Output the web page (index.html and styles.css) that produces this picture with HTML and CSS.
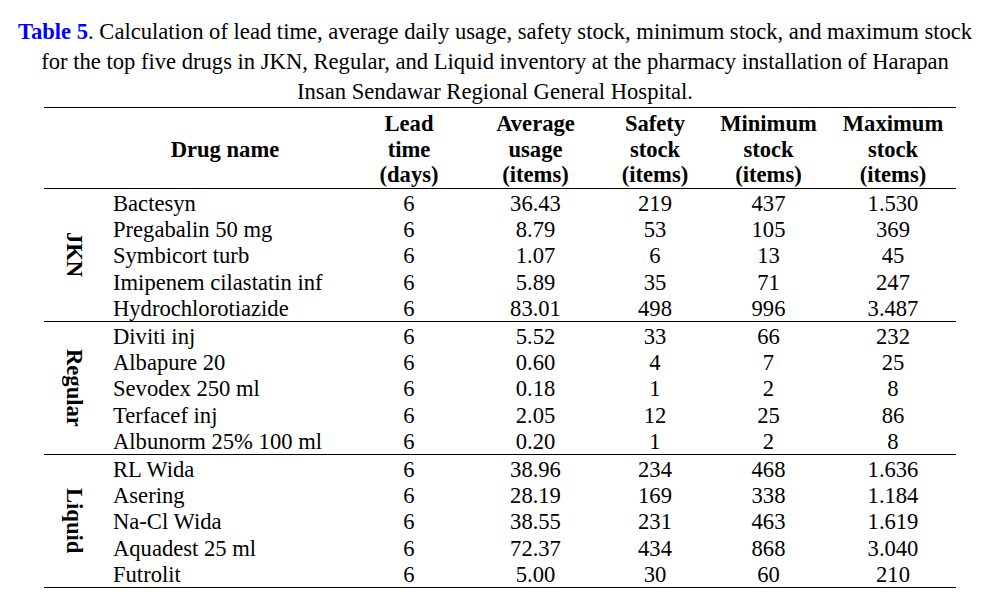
FILE: index.html
```html
<!DOCTYPE html>
<html>
<head>
<meta charset="utf-8">
<link rel="stylesheet" href="styles.css">
</head>
<body>
<p class="caption"><span class="label">Table 5</span>. Calculation of lead time, average daily usage, safety stock, minimum stock, and maximum stock<br>for the top five drugs in JKN, Regular, and Liquid inventory at the pharmacy installation of Harapan<br>Insan Sendawar Regional General Hospital.</p>
<table class="data">
  <colgroup>
    <col class="c-grp"><col class="c-name"><col class="c-lead"><col class="c-avg"><col class="c-safe"><col class="c-min"><col class="c-max">
  </colgroup>
  <thead>
    <tr>
      <th></th>
      <th>Drug name</th>
      <th>Lead<br>time<br>(days)</th>
      <th>Average<br>usage<br>(items)</th>
      <th>Safety<br>stock<br>(items)</th>
      <th>Minimum<br>stock<br>(items)</th>
      <th>Maximum<br>stock<br>(items)</th>
    </tr>
  </thead>
  <tbody>
    <tr><td class="grp" rowspan="5"><div class="vert">JKN</div></td><td class="name">Bactesyn</td><td>6</td><td>36.43</td><td>219</td><td>437</td><td>1.530</td></tr>
    <tr><td class="name">Pregabalin 50 mg</td><td>6</td><td>8.79</td><td>53</td><td>105</td><td>369</td></tr>
    <tr><td class="name">Symbicort turb</td><td>6</td><td>1.07</td><td>6</td><td>13</td><td>45</td></tr>
    <tr><td class="name">Imipenem cilastatin inf</td><td>6</td><td>5.89</td><td>35</td><td>71</td><td>247</td></tr>
    <tr><td class="name">Hydrochlorotiazide</td><td>6</td><td>83.01</td><td>498</td><td>996</td><td>3.487</td></tr>
  </tbody>
  <tbody>
    <tr><td class="grp" rowspan="5"><div class="vert">Regular</div></td><td class="name">Diviti inj</td><td>6</td><td>5.52</td><td>33</td><td>66</td><td>232</td></tr>
    <tr><td class="name">Albapure 20</td><td>6</td><td>0.60</td><td>4</td><td>7</td><td>25</td></tr>
    <tr><td class="name">Sevodex 250 ml</td><td>6</td><td>0.18</td><td>1</td><td>2</td><td>8</td></tr>
    <tr><td class="name">Terfacef inj</td><td>6</td><td>2.05</td><td>12</td><td>25</td><td>86</td></tr>
    <tr><td class="name">Albunorm 25% 100 ml</td><td>6</td><td>0.20</td><td>1</td><td>2</td><td>8</td></tr>
  </tbody>
  <tbody>
    <tr><td class="grp" rowspan="5"><div class="vert">Liquid</div></td><td class="name">RL Wida</td><td>6</td><td>38.96</td><td>234</td><td>468</td><td>1.636</td></tr>
    <tr><td class="name">Asering</td><td>6</td><td>28.19</td><td>169</td><td>338</td><td>1.184</td></tr>
    <tr><td class="name">Na-Cl Wida</td><td>6</td><td>38.55</td><td>231</td><td>463</td><td>1.619</td></tr>
    <tr><td class="name">Aquadest 25 ml</td><td>6</td><td>72.37</td><td>434</td><td>868</td><td>3.040</td></tr>
    <tr><td class="name">Futrolit</td><td>6</td><td>5.00</td><td>30</td><td>60</td><td>210</td></tr>
  </tbody>
</table>
</body>
</html>
```
FILE: styles.css
```css
html, body {
  margin: 0;
  padding: 0;
  background: #ffffff;
}
body {
  width: 990px;
  font-family: "Liberation Serif", "Times New Roman", serif;
  font-size: 22.6px;
  color: #000000;
}
.caption {
  margin: 0;
  padding-top: 17px;
  line-height: 30px;
  text-align: center;
  white-space: nowrap;
}
.caption .label {
  color: #0000ff;
  font-weight: bold;
}
.data {
  margin: 0 0 0 44px;
  width: 912px;
  border-collapse: collapse;
  table-layout: fixed;
  border-top: 1px solid #000;
  border-bottom: 1px solid #000;
}
.c-grp { width: 56px; }
.c-name { width: 250px; }
.c-lead { width: 118px; }
.c-avg { width: 135px; }
.c-safe { width: 104px; }
.c-min { width: 123px; }
.c-max { width: 126px; }
.data th {
  font-weight: bold;
  line-height: 25.5px;
  padding: 3px 0 0;
  text-align: center;
  vertical-align: top;
  border-bottom: 1px solid #000;
}
.data th:nth-child(2) {
  vertical-align: middle;
}
.data tbody {
  border-top: 1px solid #000;
}
.data td {
  padding: 4px 0 0;
  line-height: 22.4px;
  text-align: center;
  vertical-align: top;
  white-space: nowrap;
}
.data td.name {
  text-align: left;
  padding-left: 13px;
}
.data td.grp {
  font-weight: bold;
  vertical-align: middle;
  padding: 0 0 0 3px;
}
.vert {
  writing-mode: vertical-rl;
  line-height: 26px;
  margin: 0 auto;
}
```
